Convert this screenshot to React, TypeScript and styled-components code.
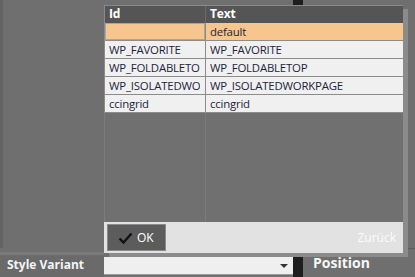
import React from 'react';
import styled, { createGlobalStyle } from 'styled-components';

const GlobalStyle = createGlobalStyle`
  html, body {
    margin: 0;
    padding: 0;
    background: #6f6f6f;
  }
  body {
    font-family: "Open Sans", "Noto Sans", sans-serif;
  }
`;

const ROWS = [
  { id: '', text: 'default', selected: true },
  { id: 'WP_FAVORITE', text: 'WP_FAVORITE' },
  { id: 'WP_FOLDABLETOP', text: 'WP_FOLDABLETOP' },
  { id: 'WP_ISOLATEDWORKPAGE', text: 'WP_ISOLATEDWORKPAGE' },
  { id: 'ccingrid', text: 'ccingrid' },
];

export default function App() {
  return (
    <>
      <GlobalStyle />
      <Screen>
        <Layout>
          <LeftPanel />
          <MiddleArea />
          <DarkBar />
          <RightPanel />
          <PropLabel>Style Variant</PropLabel>
          <Dropdown>
            <Caret />
          </Dropdown>
          <SectionHeader>Position</SectionHeader>
        </Layout>

        <Dialog>
          <Grid>
            <HeaderRow>
              <HeaderCell>Id</HeaderCell>
              <HeaderCell>Text</HeaderCell>
            </HeaderRow>
            {ROWS.map((row, key) => (
              <Row key={key} $selected={row.selected}>
                <Cell $focused={row.selected}>
                  <CellText>{row.id}</CellText>
                </Cell>
                <Cell>
                  <CellText>{row.text}</CellText>
                </Cell>
              </Row>
            ))}
            <Filler>
              <FillerCol />
              <FillerCol />
            </Filler>
          </Grid>

          <ButtonBar>
            <OkButton>
              <svg width="15" height="12" viewBox="0 0 15 12">
                <polyline
                  points="1.5,6.5 5.5,10.5 13.5,1.5"
                  fill="none"
                  stroke="#111"
                  strokeWidth="2.4"
                />
              </svg>
              OK
            </OkButton>
            <BackLink>Zurück</BackLink>
          </ButtonBar>
        </Dialog>
      </Screen>
    </>
  );
}

const Screen = styled.div`
  position: relative;
  width: 415px;
  height: 277px;
  overflow: hidden;
  background: #6f6f6f;
`;

const Layout = styled.div`
  display: grid;
  grid-template-columns: 104px 189px 10px 1fr;
  grid-template-rows: 1fr 29px;
  height: 100%;
`;

const LeftPanel = styled.div`
  border-left: 3px solid #636363;
`;

const MiddleArea = styled.div``;

const DarkBar = styled.div`
  grid-row: 1 / span 2;
  grid-column: 3;
  background: #1e1e1e;
`;

const RightPanel = styled.div``;

const PropLabel = styled.div`
  grid-column: 1;
  grid-row: 2;
  margin-top: 4px;
  border-top: 3px solid #7a7a7a;
  background: #6a6a6a;
  color: #f4f4f4;
  font-weight: 700;
  font-size: 12px;
  line-height: 20px;
  padding-left: 7px;
  white-space: nowrap;
`;

const Dropdown = styled.div`
  grid-column: 2;
  grid-row: 2;
  margin-top: 9px;
  height: 17px;
  background: #efefef;
  border-bottom: 1px solid #9a9a9a;
  display: flex;
  align-items: center;
  justify-content: flex-end;
  padding-right: 5px;
`;

const Caret = styled.span`
  width: 0;
  height: 0;
  border-left: 4px solid transparent;
  border-right: 4px solid transparent;
  border-top: 4px solid #333;
`;

const SectionHeader = styled.div`
  grid-column: 4;
  grid-row: 2;
  border-top: 1px solid #5c5c5c;
  padding-left: 10px;
  padding-top: 6px;
  color: #f6f6f6;
  font-weight: 700;
  font-size: 14px;
  line-height: 16px;
`;

const Dialog = styled.div`
  position: absolute;
  left: 104px;
  top: 5px;
  width: 299px;
  height: 248px;
  display: flex;
  flex-direction: column;
  background: #707070;
  box-shadow: 5px 4px 0 #8b8b8b;
`;

const Grid = styled.div`
  flex: 1;
  display: flex;
  flex-direction: column;
  border-top: 1px solid #8a8a8a;
  font-size: 11.4px;
  letter-spacing: -0.2px;
`;

const HeaderRow = styled.div`
  display: grid;
  grid-template-columns: 101px 1fr;
  height: 17px;
  background: #555555;
`;

const HeaderCell = styled.div`
  color: #ffffff;
  font-weight: 700;
  font-size: 12px;
  line-height: 16px;
  padding-left: 4px;
  border-left: 1px solid #8a8a8a;

  & + & {
    border-left: 1px solid #6a6a6a;
  }
`;

const Row = styled.div<{ $selected?: boolean }>`
  display: grid;
  grid-template-columns: 101px 1fr;
  height: 18px;
  box-sizing: border-box;
  border-bottom: 1px solid #8c8c8c;
  background: ${({ $selected }) => ($selected ? '#f7c68e' : '#f0f0f0')};
  color: #1c2440;
`;

const Cell = styled.div<{ $focused?: boolean }>`
  min-width: 0;
  padding: 0 5px 0 4px;
  line-height: 17px;
  border-left: 1px solid #8c8c8c;
  box-shadow: ${({ $focused }) => ($focused ? 'inset 0 0 0 1px #a6a6a6' : 'none')};
`;

const CellText = styled.span`
  display: block;
  white-space: nowrap;
  overflow: hidden;
`;

const Filler = styled.div`
  flex: 1;
  display: grid;
  grid-template-columns: 101px 1fr;
`;

const FillerCol = styled.div`
  border-left: 1px solid #7c7c7c;
`;

const ButtonBar = styled.div`
  height: 31px;
  background: #e2e2e2;
  display: flex;
  align-items: center;
  justify-content: space-between;
  padding: 0 7px 0 3px;
`;

const OkButton = styled.button`
  display: flex;
  align-items: center;
  gap: 4px;
  width: 59px;
  height: 27px;
  padding: 0 0 0 10px;
  background: #5c5c5c;
  border: 1px solid #8a8a8a;
  color: #ffffff;
  font-family: inherit;
  font-size: 12px;
  cursor: pointer;
`;

const BackLink = styled.span`
  color: #fbfbfb;
  font-size: 12px;
`;
